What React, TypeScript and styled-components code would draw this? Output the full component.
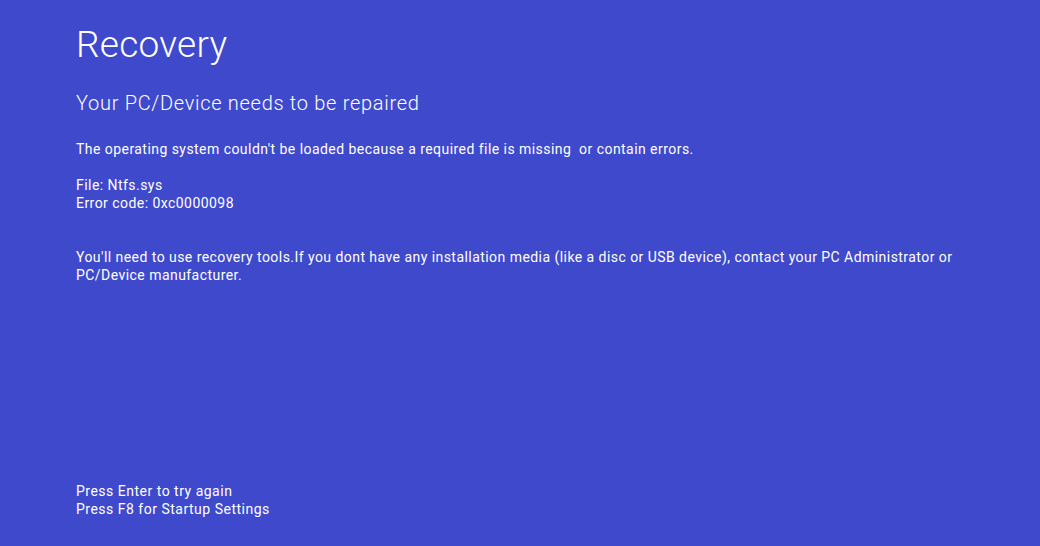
import React from "react";
import styled, { createGlobalStyle } from "styled-components";

const Global = createGlobalStyle`
  html, body { margin: 0; padding: 0; background: #3f49cc; }
  body { font-family: Roboto, "Liberation Sans", sans-serif; color: #ffffff; }
`;

const Screen = styled.div`
  box-sizing: border-box;
  width: 1040px;
  height: 546px;
  background: #3f49cc;
  padding: 22px 0 28px 76px;
  display: flex;
  flex-direction: column;
  overflow: hidden;
`;

const Title = styled.h1`
  margin: 0;
  font-size: 37px;
  font-weight: 300;
  line-height: 46px;
  letter-spacing: 0.25px;
`;

const Subtitle = styled.h2`
  margin: 22px 0 0;
  font-size: 20px;
  font-weight: 300;
  line-height: 26px;
  letter-spacing: 0.7px;
`;

const Para = styled.p<{ $gap: number }>`
  margin: ${(p) => p.$gap}px 0 0;
  font-size: 14px;
  font-weight: 400;
  line-height: 18px;
  letter-spacing: 0.45px;
  max-width: 900px;
`;

const Footer = styled.div`
  margin-top: auto;
  font-size: 14px;
  font-weight: 400;
  line-height: 18px;
  letter-spacing: 0.5px;
`;

export default function App() {
  return (
    <>
      <Global />
      <Screen>
        <Title>Recovery</Title>
        <Subtitle>Your PC/Device needs to be repaired</Subtitle>
        <Para $gap={24}>
          The operating system couldn't be loaded because a required file is missing&nbsp; or contain errors.
        </Para>
        <Para $gap={18}>
          File: Ntfs.sys
          <br />
          Error code: 0xc0000098
        </Para>
        <Para $gap={36}>
          You'll need to use recovery tools.If you dont have any installation media (like a disc or USB device), contact your PC Administrator or PC/Device manufacturer.
        </Para>
        <Footer>
          Press Enter to try again
          <br />
          Press F8 for Startup Settings
        </Footer>
      </Screen>
    </>
  );
}
